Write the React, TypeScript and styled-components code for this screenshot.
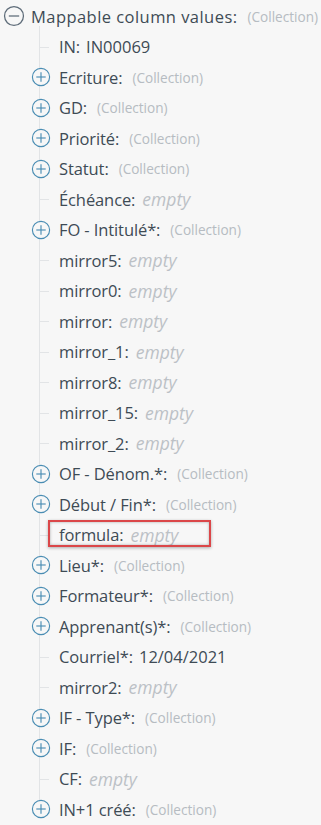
import React from "react";
import styled, { createGlobalStyle, css } from "styled-components";

const Global = createGlobalStyle`
  html, body { margin: 0; padding: 0; background: #f7f7f7; }
  body { font-family: "Open Sans", "Noto Sans", sans-serif; }
`;

const Tree = styled.div`
  padding-top: 1px;
  width: 321px;
  height: 825px;
  background: #f7f7f7;
  overflow: hidden;
`;

const Row = styled.div<{ $level: number }>`
  position: relative;
  display: flex;
  align-items: center;
  height: 30.5px;
  padding-left: ${(p) => (p.$level === 0 ? 3 : 31)}px;
  white-space: nowrap;
`;

const Children = styled.div`
  position: relative;
  &::before {
    content: "";
    position: absolute;
    left: 39px;
    top: -6px;
    bottom: 14px;
    width: 1px;
    background: #e2e4e6;
  }
`;

const Tick = styled.span`
  position: absolute;
  left: 39px;
  top: 50%;
  width: 10px;
  height: 1px;
  background: #e2e4e6;
`;

const Toggle = styled.svg<{ $top?: boolean }>`
  flex: none;
  position: relative;
  ${(p) =>
    p.$top
      ? css`
          width: 22px;
          height: 22px;
          margin-right: 6px;
          color: #5e6c79;
        `
      : css`
          width: 20px;
          height: 20px;
          margin-right: 8px;
          color: #4a8db3;
        `}
`;

const Spacer = styled.span`
  flex: none;
  width: 28px;
`;

const Label = styled.span<{ $wide?: boolean }>`
  font-size: 16.5px;
  color: #3e4b55;
  letter-spacing: ${(p) => (p.$wide ? "0.45px" : "-0.1px")};
`;

const Collection = styled.span`
  font-size: 13.6px;
  color: #b6bcc2;
  margin-left: 10px;
`;

const Value = styled.span<{ $empty?: boolean }>`
  font-size: ${(p) => (p.$empty ? 17.5 : 16.5)}px;
  margin-left: ${(p) => (p.$empty ? 7 : 6)}px;
  color: ${(p) => (p.$empty ? "#bcc1c6" : "#3e4b55")};
  font-style: ${(p) => (p.$empty ? "italic" : "normal")};
`;

const Highlight = styled.span`
  position: absolute;
  left: 48px;
  top: 0px;
  width: 159px;
  height: 23px;
  border: 2.5px solid #db4749;
  box-shadow: inset 0 0 3px rgba(0, 0, 0, 0.3), 0 1px 3px rgba(0, 0, 0, 0.3);
  pointer-events: none;
`;

type Item =
  | { kind: "col"; label: string }
  | { kind: "leaf"; label: string; value?: string; box?: boolean };

const items: Item[] = [
  { kind: "leaf", label: "IN:", value: "IN00069" },
  { kind: "col", label: "Ecriture:" },
  { kind: "col", label: "GD:" },
  { kind: "col", label: "Priorité:" },
  { kind: "col", label: "Statut:" },
  { kind: "leaf", label: "Échéance:" },
  { kind: "col", label: "FO - Intitulé*:" },
  { kind: "leaf", label: "mirror5:" },
  { kind: "leaf", label: "mirror0:" },
  { kind: "leaf", label: "mirror:" },
  { kind: "leaf", label: "mirror_1:" },
  { kind: "leaf", label: "mirror8:" },
  { kind: "leaf", label: "mirror_15:" },
  { kind: "leaf", label: "mirror_2:" },
  { kind: "col", label: "OF - Dénom.*:" },
  { kind: "col", label: "Début / Fin*:" },
  { kind: "leaf", label: "formula:", box: true },
  { kind: "col", label: "Lieu*:" },
  { kind: "col", label: "Formateur*:" },
  { kind: "col", label: "Apprenant(s)*:" },
  { kind: "leaf", label: "Courriel*:", value: "12/04/2021" },
  { kind: "leaf", label: "mirror2:" },
  { kind: "col", label: "IF - Type*:" },
  { kind: "col", label: "IF:" },
  { kind: "leaf", label: "CF:" },
  { kind: "col", label: "IN+1 créé:" },
];

const Icon = ({ plus, top }: { plus: boolean; top?: boolean }) => (
  <Toggle $top={top} viewBox="0 0 20 20" fill="none" stroke="currentColor" strokeWidth={1.15}>
    <circle cx="10" cy="10" r="8.6" fill="#f7f7f7" />
    <line x1="5.3" y1="10" x2="14.7" y2="10" />
    {plus && <line x1="10" y1="5.3" x2="10" y2="14.7" />}
  </Toggle>
);

export default function App() {
  return (
    <>
      <Global />
      <Tree>
        <Row $level={0}>
          <Icon plus={false} top />
          <Label $wide>Mappable column values:</Label>
          <Collection>(Collection)</Collection>
        </Row>
        <Children>
          {items.map((it, i) =>
            it.kind === "col" ? (
              <Row $level={1} key={i}>
                <Icon plus />
                <Label>{it.label}</Label>
                <Collection>(Collection)</Collection>
              </Row>
            ) : (
              <Row $level={1} key={i}>
                <Tick />
                <Spacer />
                <Label>{it.label}</Label>
                <Value $empty={!it.value}>{it.value ?? "empty"}</Value>
                {it.box && <Highlight />}
              </Row>
            )
          )}
        </Children>
      </Tree>
    </>
  );
}
